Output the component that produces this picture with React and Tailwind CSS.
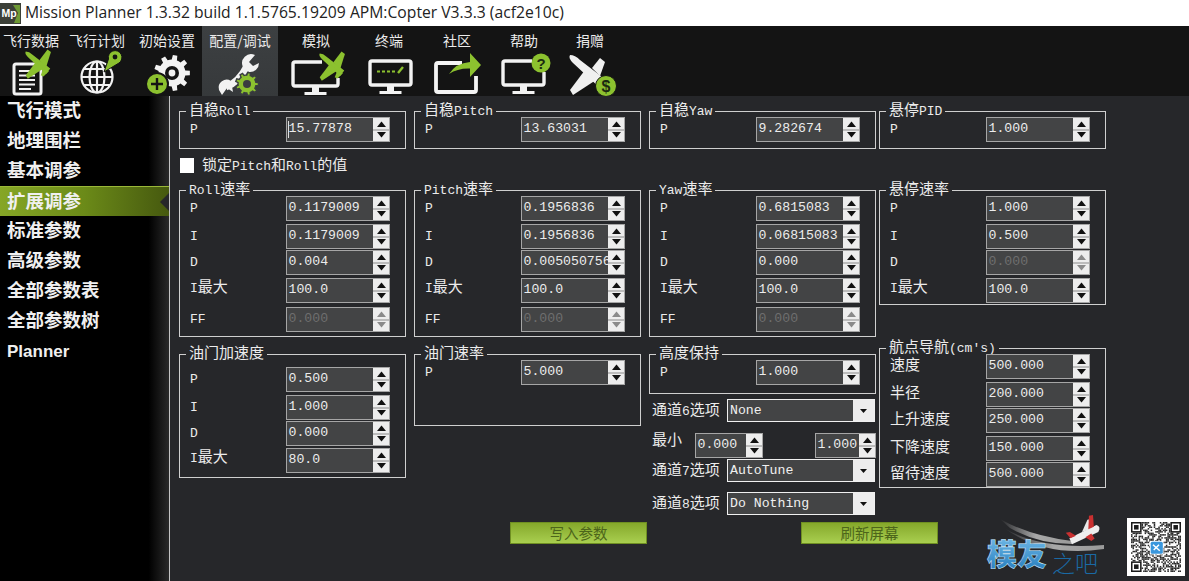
import React from "react";

const CJK = "font-['Noto_Sans_CJK_SC',sans-serif]";
const MONO = "font-['Liberation_Mono','Noto_Sans_CJK_SC',monospace]";

function T({ s }) {
  return (
    <span className="inline-flex items-baseline whitespace-pre">
      {s.split(/([\x00-\x7f]+)/).filter(Boolean).map((p, i) =>
        /^[\x00-\x7f]/.test(p)
          ? <span key={i} className={`${MONO} text-[13px] leading-[20px]`}>{p}</span>
          : <span key={i} className={`${CJK} text-[15px] leading-[20px]`}>{p}</span>
      )}
    </span>
  );
}

function Arrow({ up, off }) {
  return (
    <svg width="11" height="7" viewBox="0 0 11 7" className="block">
      <path d={up ? "M5.5 0.5 L10 6 H1 Z" : "M1 1 H10 L5.5 6.5 Z"} fill={off ? "#8a8a8a" : "#111"} />
    </svg>
  );
}

function Spin({ v, off, w = "w-[104px]", caret }) {
  return (
    <div className={`relative flex h-[25px] shrink-0 border border-[#a6a6a6] bg-[#434445] ${w}`}>
      {caret && <div className="absolute left-[1px] top-[3px] h-[17px] w-[1px] bg-[#e0e0e0]" />}
      <div className={`flex-1 overflow-hidden whitespace-nowrap pl-[1.5px] pb-[3px] ${MONO} text-[13.2px] leading-[21px] ${off ? "text-[#6e6e6e]" : "text-[#ececec]"}`}>{v}</div>
      <div className="flex w-[16px] shrink-0 flex-col items-center justify-between bg-[#ededed] py-[3px]">
        <Arrow up off={off} />
        <div className="h-[2px] w-full bg-[#bcbcbc]" />
        <Arrow off={off} />
      </div>
    </div>
  );
}

function Row({ label, v, off, mt, caret }) {
  const latin = /^[\x00-\x7f]+$/.test(label);
  return (
    <div className={`flex items-center ${mt}`}>
      <div className={`flex h-[20px] w-[106px] shrink-0 items-center pl-[10px] text-[#ececec] ${latin ? "translate-y-[-0.5px]" : "translate-y-[-3px]"}`}><T s={label} /></div>
      <Spin v={v} off={off} caret={caret} />
    </div>
  );
}

function Group({ title, h, mt = "", children }) {
  return (
    <div className={`relative w-[227px] shrink-0 border border-[#cfcfcf] ${h} ${mt}`}>
      <div className="absolute left-[6px] top-[-13px] flex h-[20px] items-center whitespace-nowrap px-[3px] text-[#ececec]">
        <div className="absolute inset-x-0 bottom-[3px] h-[6px] bg-[#26272a]" />
        <div className="relative"><T s={title} /></div>
      </div>
      {children}
    </div>
  );
}

function Combo({ v }) {
  return (
    <div className="flex h-[23px] w-[148px] shrink-0 border border-[#f0f0f0] bg-[#434445]">
      <div className={`flex-1 pl-[2px] ${MONO} text-[13.2px] leading-[21px] text-[#f0f0f0]`}>{v}</div>
      <div className="flex w-[21px] items-center justify-center bg-[#ededed]">
        <svg width="7" height="4" viewBox="0 0 7 4"><path d="M0 0H7L3.5 4Z" fill="#111" /></svg>
      </div>
    </div>
  );
}

function CLabel({ s, w = "w-[78px]", shift = "translate-y-[0px]" }) {
  return <div className={`${w} ${shift} flex h-[20px] shrink-0 items-center pl-[3px] text-[#ececec]`}><T s={s} /></div>;
}

function GreenBtn({ s, ml }) {
  return (
    <div className={`flex h-[22px] w-[137px] shrink-0 items-center justify-center border border-[#6f8f22] bg-gradient-to-b from-[#85a82a] to-[#a9cf4f] ${CJK} text-[14.5px] text-[#4c651a] ${ml}`}>{s}</div>
  );
}

function gearPath(cx, cy, R, r, n) {
  let d = "";
  for (let i = 0; i < n; i++) {
    const step = (Math.PI * 2) / n;
    const a = i * step;
    const pts = [[r, a - step * 0.5], [r, a - step * 0.28], [R, a - step * 0.18], [R, a + step * 0.18], [r, a + step * 0.28]];
    pts.forEach(([q, t], j) => {
      d += `${i === 0 && j === 0 ? "M" : "L"}${(cx + q * Math.cos(t)).toFixed(2)} ${(cy + q * Math.sin(t)).toFixed(2)} `;
    });
  }
  return d + "Z";
}

function Plane({ x, y, s = 1, fill, big }) {
  return (
    <g transform={`translate(${x} ${y}) scale(${s})`} fill={fill}>
      <path d="M-18 -17 Q-13 -17 -8 -12 L18 8 L12 16 L-15 -9 Q-20 -14 -18 -17 Z" />
      <path d="M-3 -2 L-18 18 L-15 23 L8 8 Z" />
      <path d={big ? "M2 -4 L14 -20 L19 -16 L12 6 Z" : "M4 -4 L12 -14 L17 -10 L12 4 Z"} />
      {big && <path d="M8 8 L4 18 L8 20 L16 12 Z" />}
    </g>
  );
}

function Monitor({ x, y, w, h, open }) {
  const cx = x + w / 2;
  return (
    <g fill="none" stroke="#f2f2f2" strokeWidth="3.4" strokeLinejoin="round">
      <path d={open || `M${x + 2} ${y} H${x + w - 2} Q${x + w} ${y} ${x + w} ${y + 2} V${y + h - 2} Q${x + w} ${y + h} ${x + w - 2} ${y + h} H${x + 2} Q${x} ${y + h} ${x} ${y + h - 2} V${y + 2} Q${x} ${y} ${x + 2} ${y} Z`} />
      <path d={`M${cx} ${y + h} V${y + h + 6}`} strokeWidth="7" />
      <path d={`M${cx - 11} ${y + h + 7.5} H${cx + 11}`} strokeWidth="3" />
    </g>
  );
}

const GREEN = "#8cc12f";

const icons = [
  <g key="1">
    <rect x="14" y="64" width="27" height="30" rx="2" fill="none" stroke="#f2f2f2" strokeWidth="3" />
    <path d="M19 71H35M19 75.5H35M19 80H35M19 84.5H35M19 89H31" stroke="#f2f2f2" strokeWidth="2" />
    <Plane x={38} y={63} s={0.68} fill={GREEN} big />
  </g>,
  <g key="2">
    <g fill="none" stroke="#f2f2f2" strokeWidth="2.2">
      <circle cx="97" cy="77" r="15.5" />
      <ellipse cx="97" cy="77" rx="7.5" ry="15.5" />
      <path d="M97 61.5V92.5M81.5 77H112.5M84 69H110M84 85H110" />
    </g>
    <path d="M104 72 L108.5 59 A6.8 6.8 0 1 1 119 63 Z" fill={GREEN} stroke="#141414" strokeWidth="1" />
    <circle cx="115" cy="57" r="2.4" fill="#141414" />
  </g>,
  <g key="3">
    <path d={gearPath(172, 73, 18, 13.5, 9)} fill="#f2f2f2" />
    <circle cx="172" cy="73" r="7" fill="#141414" />
    <circle cx="172" cy="73" r="3.4" fill="#f2f2f2" />
    <circle cx="157" cy="84" r="11" fill={GREEN} stroke="#141414" strokeWidth="2" />
    <path d="M151 84H163M157 78V90" stroke="#141414" strokeWidth="2.4" />
  </g>,
  <g key="4">
    <path d="M226 87 Q239 82 247 66" fill="none" stroke="#f2f2f2" strokeWidth="7" />
    <path d="M255 55 A9 9 0 0 0 243 67 L249 72 A9 9 0 0 0 259 63 L253 66 L249 62 Z" fill="#f2f2f2" />
    <path d="M219 90 A8 8 0 0 1 231 81 L233 92 L227 88 L222 95 Z" fill="#f2f2f2" />
    <path d={gearPath(247, 84, 11.5, 9, 9)} fill={GREEN} stroke="#3a3d40" strokeWidth="1.4" />
    <circle cx="247" cy="84" r="4" fill="#3a3d40" />
  </g>,
  <g key="5">
    <Monitor x={293} y={62} w={45} h={24} />
    <rect x="322" y="60" width="18" height="18" fill="#141414" />
    <Plane x={332} y={65} s={0.68} fill={GREEN} big />
  </g>,
  <g key="6">
    <Monitor x={370} y={61} w={41} h={24} />
    <path d="M377 71.5H380M382 71.5H385M387 71.5H390M392 71.5H395" stroke={GREEN} strokeWidth="2" />
    <path d="M398 73L403 67" stroke={GREEN} strokeWidth="2.4" />
  </g>,
  <g key="7">
    <path d="M462 63 H438 Q436 63 436 65 V90 Q436 92 438 92 H474 Q476 92 476 90 V76" fill="none" stroke="#f4f4f4" strokeWidth="3.8" />
    <path d="M449 74 Q456 63 470 62 V53 L481 65 L470 77 V68.5 Q458 68 449 74 Z" fill={GREEN} />
  </g>,
  <g key="8">
    <Monitor x={503} y={61} w={41} h={24} open="M532 61 H505 Q503 61 503 63 V83 Q503 85 505 85 H542 Q544 85 544 83 V72" />
    <circle cx="541" cy="63" r="9.5" fill={GREEN} />
    <text x="541" y="68.5" textAnchor="middle" className="font-['Liberation_Sans',sans-serif]" fontSize="15" fontWeight="700" fill="#1c2a10">?</text>
  </g>,
  <g key="9">
    <Plane x={588} y={72} fill="#f0f0f0" />
    <circle cx="606" cy="86" r="10.5" fill={GREEN} stroke="#141414" strokeWidth="1" />
    <text x="606" y="92" textAnchor="middle" className="font-['Liberation_Sans',sans-serif]" fontSize="16" fontWeight="700" fill="#1c2a10">$</text>
  </g>,
];

const tabs = [
  ["飞行数据", 0, "w-[62px]", 62],
  ["飞行计划", 62, "w-[70px]", 70],
  ["初始设置", 132, "w-[70px]", 70],
  ["配置/调试", 202, "w-[76px]", 76],
  ["模拟", 278, "w-[76px]", 76],
  ["终端", 354, "w-[70px]", 70],
  ["社区", 424, "w-[66px]", 66],
  ["帮助", 490, "w-[68px]", 68],
  ["捐赠", 558, "w-[64px]", 64],
];

const side = ["飞行模式", "地理围栏", "基本调参", "扩展调参", "标准参数", "高级参数", "全部参数表", "全部参数树"];

const rateMt = ["mt-[5px]", "mt-[3px]", "mt-[1px]", "mt-[3px]", "mt-[4px]"];

function rates(vals) {
  const labels = ["P", "I", "D", "I最大", "FF"];
  return vals.map((v, i) => (
    <Row key={i} label={labels[i]} v={v} mt={rateMt[i]} off={i === 4} />
  ));
}

function qrCells() {
  const n = 33;
  const out = [];
  let s = 0x2f6e2b1;
  const inF = (x, y, a, b) => x >= a && x < a + 8 && y >= b && y < b + 8;
  for (let y = 0; y < n; y++) {
    for (let x = 0; x < n; x++) {
      s ^= s << 13; s ^= s >>> 17; s ^= s << 5; s >>>= 0;
      if (inF(x, y, -1, -1) || inF(x, y, n - 7, -1) || inF(x, y, -1, n - 7)) continue;
      if (x > 12 && x < 21 && y > 12 && y < 21) continue;
      if (s % 100 < 52) out.push([x, y]);
    }
  }
  return out;
}
const QR = qrCells();

function Finder({ x, y }) {
  return (
    <g>
      <rect x={x + 0.5} y={y + 0.5} width="6" height="6" fill="none" stroke="#1a1a1a" />
      <rect x={x + 2} y={y + 2} width="3" height="3" fill="#1a1a1a" />
    </g>
  );
}

function QRCode() {
  return (
    <div className="h-[58px] w-[58px] shrink-0 bg-white p-[4px]">
      <svg width="50" height="50" viewBox="0 0 33 33" className="block">
        {QR.map(([x, y]) => <rect key={`${x}-${y}`} x={x} y={y} width="1" height="1" fill="#2a2a2a" />)}
        <Finder x={0} y={0} />
        <Finder x={26} y={0} />
        <Finder x={0} y={26} />
        <rect x="12.5" y="12.5" width="9" height="9" fill="#fff" />
        <rect x="13" y="13" width="8" height="8" rx="1" fill="#3a97dd" />
        <path d="M14.5 15 L19 19 M15 18.5 L18.5 15" stroke="#fff" strokeWidth="1" />
      </svg>
    </div>
  );
}

function Logo() {
  return (
    <svg width="125" height="66" viewBox="985 515 125 66" className="shrink-0">
      <defs>
        <linearGradient id="sw" x1="0" x2="1" y1="0" y2="0">
          <stop offset="0" stopColor="#26272a" />
          <stop offset="0.5" stopColor="#a8a8a8" />
          <stop offset="1" stopColor="#9a9a9a" />
        </linearGradient>
        <linearGradient id="bl" x1="0" x2="0" y1="0" y2="1">
          <stop offset="0" stopColor="#7fc4ee" />
          <stop offset="1" stopColor="#1f78bb" />
        </linearGradient>
      </defs>
      <path d="M1000 519 Q1030 536 1072 541 L1072 544 Q1038 544 1010 528 Z" fill="url(#sw)" />
      <path d="M1004 528 Q1040 550 1104 545 L1104 549 Q1045 558 1004 528 Z" fill="url(#sw)" />
      <g transform="translate(1085 534) rotate(-24)">
        <path d="M-16 -2.5 L14 -3.5 Q18 0 13 3.5 L-16 4 Z" fill="#eee" />
        <path d="M-2 -3 L8 -12 L13 -11 L8 -2 Z" fill="#e8e8e8" />
        <path d="M5 -3 L11 -15 L15 -14 L11 -3 Z" fill="#c93030" />
        <path d="M-15 -2 L-17 -9 L-13 -8 L-9 -2 Z" fill="#c93030" />
        <path d="M-1 3 L3 9 L7 8 L6 2 Z" fill="#c33" />
      </g>
      <text x="987" y="565" className={CJK} fontSize="30" fontWeight="900" fill="url(#bl)" stroke="#cfe9fa" strokeWidth="0.5">模友</text>
      <text x="1052" y="572" className={CJK} fontSize="23" fontWeight="300" fill="#1a6aa5">之吧</text>
    </svg>
  );
}

export default function App() {
  return (
    <div className="flex h-[581px] w-[1189px] flex-col overflow-hidden bg-[#26272a]">
      <div className="flex h-[26px] shrink-0 items-center bg-white">
        <svg width="21" height="21" viewBox="0 0 21 21" className="ml-0 shrink-0">
          <rect width="21" height="21" fill="#3c4038" />
          <path d="M13 2 L20 2 L20 20 L14 20 L18 10 Z" fill="#6f9a35" />
          <text x="1.5" y="14" className="font-['Liberation_Sans',sans-serif]" fontSize="10.5" fontWeight="700" fill="#fff">Mp</text>
        </svg>
        <div className="ml-[4px] whitespace-nowrap font-['Open_Sans',sans-serif] text-[15.7px] text-[#222]">Mission Planner 1.3.32 build 1.1.5765.19209 APM:Copter V3.3.3 (acf2e10c)</div>
      </div>

      <div className="flex h-[70px] shrink-0 bg-[#141414]">
        {tabs.map(([s, x, w, wn], i) => (
          <div key={s} className={`flex h-full shrink-0 flex-col items-center ${w} ${i === 3 ? "bg-gradient-to-b from-[#3d4042] to-[#36393b]" : ""}`}>
            <div className={`h-[22px] pt-[4px] ${CJK} whitespace-nowrap text-[14px] leading-[20px] text-[#ececec]`}>{s}</div>
            <svg width={wn} height="48" viewBox={`${x} 48 ${wn} 48`} className="block shrink-0 overflow-hidden">{icons[i]}</svg>
          </div>
        ))}
      </div>

      <div className="flex min-h-0 flex-1">
        <div className="relative w-[170px] shrink-0 border-r border-[#c4c4c4] bg-[linear-gradient(90deg,#000_88%,#2a2a2a_100%)]">
          {side.map((s, i) => (
            <div key={s} className={`flex h-[30px] items-center pb-[2px] pl-[7px] ${CJK} text-[18.5px] font-bold text-[#f0f0f0] ${i === 3 ? "relative border-t border-[#9ab838] bg-gradient-to-r from-[#86a626] via-[#6b8a18] to-[#46590f]" : ""}`}>
              {s}
              {i === 3 && (
                <svg width="9" height="18" viewBox="0 0 9 18" className="absolute right-0 top-[6px]"><path d="M9 0V18L0 9Z" fill="#26272a" /></svg>
              )}
            </div>
          ))}
          <div className="flex h-[30px] items-center pl-[7px] pt-[2px] font-['Liberation_Sans',sans-serif] text-[17px] font-bold text-[#f0f0f0]">Planner</div>
        </div>

        <div className="flex min-w-0 flex-1 flex-col pl-[9px] pt-[15px]">
          <div className="flex items-start">
            <Group title="自稳Roll" h="h-[38px]"><Row label="P" v="15.77878" mt="mt-[5px]" caret /></Group>
            <div className="ml-[8px]"><Group title="自稳Pitch" h="h-[38px]"><Row label="P" v="13.63031" mt="mt-[5px]" /></Group></div>
            <div className="ml-[8px]"><Group title="自稳Yaw" h="h-[38px]"><Row label="P" v="9.282674" mt="mt-[5px]" /></Group></div>
            <div className="ml-[3px]"><Group title="悬停PID" h="h-[38px]"><Row label="P" v="1.000" mt="mt-[5px]" /></Group></div>
          </div>

          <div className="flex h-[41px] shrink-0 items-start pl-[1px] pt-[9px]">
            <div className="h-[15px] w-[14px] bg-white" />
            <div className="ml-[8px] mt-[-3px] flex h-[20px] items-center text-[#ececec]"><T s="锁定Pitch和Roll的值" /></div>
          </div>

          <div className="flex items-start">
            <Group title="Roll速率" h="h-[147px]">{rates(["0.1179009", "0.1179009", "0.004", "100.0", "0.000"])}</Group>
            <div className="ml-[8px]"><Group title="Pitch速率" h="h-[147px]">{rates(["0.1956836", "0.1956836", "0.00505075603", "100.0", "0.000"])}</Group></div>
            <div className="ml-[8px]"><Group title="Yaw速率" h="h-[147px]">{rates(["0.6815083", "0.06815083", "0.000", "100.0", "0.000"])}</Group></div>
            <div className="ml-[3px]">
              <Group title="悬停速率" h="h-[115px]">
                <Row label="P" v="1.000" mt="mt-[5px]" />
                <Row label="I" v="0.500" mt="mt-[3px]" />
                <Row label="D" v="0.000" mt="mt-[1px]" off />
                <Row label="I最大" v="100.0" mt="mt-[3px]" />
              </Group>
            </div>
          </div>

          <div className="mt-[11px] flex items-start">
            <Group title="油门加速度" h="h-[124px]" mt="mt-[6px]">
              <Row label="P" v="0.500" mt="mt-[12px]" />
              <Row label="I" v="1.000" mt="mt-[3px]" />
              <Row label="D" v="0.000" mt="mt-[1px]" />
              <Row label="I最大" v="80.0" mt="mt-[2px]" />
            </Group>
            <div className="ml-[8px]">
              <Group title="油门速率" h="h-[72px]" mt="mt-[6px]"><Row label="P" v="5.000" mt="mt-[5px]" /></Group>
            </div>
            <div className="ml-[8px] flex w-[227px] shrink-0 flex-col">
              <Group title="高度保持" h="h-[40px]" mt="mt-[6px]"><Row label="P" v="1.000" mt="mt-[5px]" /></Group>
              <div className="mt-[5px] flex items-center"><CLabel s="通道6选项" /><Combo v="None" /></div>
              <div className="mt-[11px] flex items-center">
                <CLabel s="最小" w="w-[46px]" shift="translate-y-[-7px]" />
                <Spin v="0.000" w="w-[68px]" />
                <div className="ml-[52px]"><Spin v="1.000" w="w-[61px]" /></div>
              </div>
              <div className="mt-[1px] flex items-center"><CLabel s="通道7选项" /><Combo v="AutoTune" /></div>
              <div className="mt-[10px] flex items-center"><CLabel s="通道8选项" /><Combo v="Do Nothing" /></div>
            </div>
            <div className="ml-[3px]">
              <Group title="航点导航(cm's)" h="h-[140px]">
                <Row label="速度" v="500.000" mt="mt-[5px]" />
                <Row label="半径" v="200.000" mt="mt-[3px]" />
                <Row label="上升速度" v="250.000" mt="mt-[1px]" />
                <Row label="下降速度" v="150.000" mt="mt-[3px]" />
                <Row label="留待速度" v="500.000" mt="mt-[1px]" />
              </Group>
            </div>
          </div>

          <div className="flex flex-1 items-start">
            <div className="mt-[7px] flex">
              <GreenBtn s="写入参数" ml="ml-[331px]" />
              <GreenBtn s="刷新屏幕" ml="ml-[154px]" />
            </div>
            <div className="ml-[47px]"><Logo /></div>
            <div className="ml-[17px] mt-[3px]"><QRCode /></div>
          </div>
        </div>
      </div>
    </div>
  );
}
